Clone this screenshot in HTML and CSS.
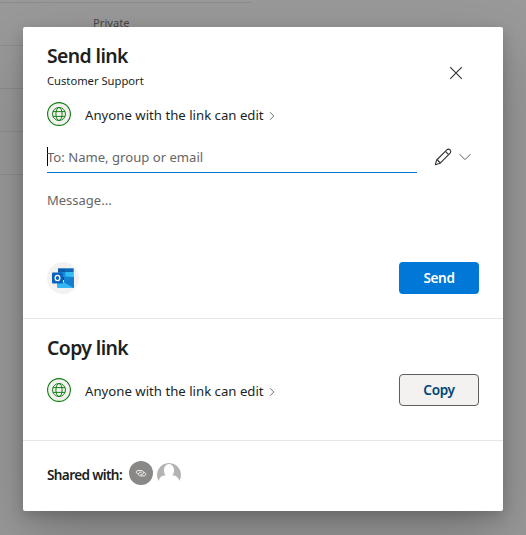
FILE: index.html
```html
<!DOCTYPE html>
<html lang="en">
<head>
<meta charset="utf-8">
<title>Send link</title>
<link rel="stylesheet" href="styles.css">
</head>
<body>
<svg width="0" height="0" class="defs" aria-hidden="true">
  <symbol id="globe" viewBox="0 0 24 24">
    <circle cx="12" cy="12" r="11.4" fill="#f3f2f1" stroke="#107c10" stroke-width="1.1"/>
    <g fill="none" stroke="#107c10" stroke-width="0.95">
      <circle cx="12" cy="12" r="6.5"/>
      <ellipse cx="12" cy="12" rx="3.1" ry="6.5"/>
      <path d="M6 9.6h12M6 14.4h12"/>
    </g>
  </symbol>
  <symbol id="chevron" viewBox="0 0 6 10">
    <path d="M1 1.2 4.8 5 1 8.8" fill="none" stroke="#605e5c" stroke-width="0.9"/>
  </symbol>
</svg>
<main class="page">
  <div class="row"></div>
  <div class="row"><span class="cell">Private</span></div>
  <div class="row"></div>
  <div class="row"></div>
  <div class="row"></div>
</main>
<div class="overlay">
  <div class="dialog" role="dialog">
    <section class="send">
      <header class="header">
        <div>
          <h2 class="title">Send link</h2>
          <p class="subtitle">Customer Support</p>
        </div>
        <svg class="close" viewBox="0 0 14 14"><path d="M1.2 1.2 12.8 12.8M12.8 1.2 1.2 12.8" fill="none" stroke="#323130" stroke-width="1.1"/></svg>
      </header>
      <div class="perm">
        <svg class="globe"><use href="#globe"/></svg>
        <span class="perm-text">Anyone with the link can edit</span>
        <svg class="chevron"><use href="#chevron"/></svg>
      </div>
      <div class="to">
        <div class="field"><i class="caret"></i><span>To: Name, group or email</span></div>
        <svg class="pencil" viewBox="0 0 18 18"><g fill="none" stroke="#323130" stroke-width="1.1" stroke-linejoin="round"><path d="M1.3 16.7 2.7 12 12.8 1.9a2.2 2.2 0 0 1 3.3 3.3L6 15.3Z"/><path d="M11.4 3.3l3.3 3.3M2.7 12l1.5.3.3 1.2 1.3.4.2 1.4"/></g></svg>
        <svg class="down" viewBox="0 0 12 8"><path d="M.6 1.2 6 6.6 11.4 1.2" fill="none" stroke="#605e5c"/></svg>
      </div>
      <div class="message">Message...</div>
      <footer class="actions">
        <div class="outlook">
          <svg viewBox="0 0 32 32">
            <path d="M11 6.500h15.500v9H11z" fill="#1490df"/>
            <path d="M11 6.500h7.500V10H11z" fill="#0f5aa8"/>
            <path d="M18.500 6.500h8V10h-8z" fill="#1066b5"/>
            <path d="M18.500 10h8v5h-8z" fill="#32bdf5"/>
            <path d="M11 15h7.500v3H11z" fill="#0a4a91"/>
            <path d="M17 14.500 27 15v11H17z" fill="#1682d4"/>
            <path d="M10 16.500 27 26H11a1 1 0 0 1-1-1z" fill="#35b8f1"/>
            <path d="M27 15v11L18 20.500z" fill="#147bcd"/>
            <rect x="5" y="10.500" width="11" height="11" rx="1" fill="#0a62bb"/>
            <ellipse cx="10.500" cy="16" rx="2.300" ry="2.600" fill="none" stroke="#fff" stroke-width="1.300"/>
          </svg>
        </div>
        <button class="btn primary">Send</button>
      </footer>
    </section>
    <section class="copy">
      <h2 class="title">Copy link</h2>
      <div class="copy-row">
        <div class="perm">
          <svg class="globe"><use href="#globe"/></svg>
          <span class="perm-text">Anyone with the link can edit</span>
          <svg class="chevron"><use href="#chevron"/></svg>
        </div>
        <button class="btn secondary">Copy</button>
      </div>
    </section>
    <section class="shared">
      <span class="shared-text">Shared with:</span>
      <svg class="avatar" viewBox="0 0 24 24"><circle cx="12" cy="12" r="12" fill="#8a8886"/><g fill="none" stroke="#fff" stroke-width="0.9" stroke-linecap="round"><path d="M8.800 12.800C6.600 12.300 6.800 9.600 9 9.600h3.400c2.900 0 2.900 3.700.2 3.700h-.8"/><path d="M12.400 11.200h-.9c-2.700 0-2.700 3.700.2 3.700h3.100c2.500 0 2.600-3 .5-3.500"/></g></svg>
      <svg class="avatar" viewBox="0 0 24 24"><path d="M1.600 20A12 12 0 1 1 22.400 20C21.500 16.500 19.500 14.800 15.300 14.300 19 10 16.500 3 12 3S5 10 8.700 14.300C4.500 14.800 2.500 16.500 1.600 20Z" fill="#b3b3b3"/></svg>
    </section>
  </div>
</div>
</body>
</html>
```
FILE: styles.css
```css
* { box-sizing: border-box; }

body {
  margin: 0;
  height: 535px;
  position: relative;
  overflow: hidden;
  background: #999;
  color: #201f1e;
  font-family: "Noto Sans", "Open Sans", sans-serif;
  font-size: 13.2px;
}

.defs { position: absolute; }
.page { width: 251px; }

.row {
  height: 43px;
  border-bottom: 1px solid #8c8c8c;
}
.row:first-child { height: 3px; }

.cell {
  display: block;
  padding: 12px 0 0 93px;
  font-size: 11.2px;
  line-height: 16px;
  color: #484848;
}

.overlay {
  position: absolute;
  inset: 0;
  padding: 27px 23px 24px;
}

.dialog {
  height: 484px;
  display: flex;
  flex-direction: column;
  background: #fff;
  border-radius: 2px;
  box-shadow: 0 25px 58px rgba(0, 0, 0, .22), 0 5px 14px rgba(0, 0, 0, .18);
}

.send {
  height: 292px;
  padding: 15px 24px 0;
  border-bottom: 1px solid #e6e6e6;
}

.header {
  display: flex;
  justify-content: space-between;
  height: 60px;
}

.title {
  margin: 0;
  font-size: 19.4px;
  line-height: 28px;
  font-weight: 600;
  letter-spacing: -.6px;
  white-space: nowrap;
}

.subtitle {
  margin: 3px 0 0;
  font-size: 11.2px;
  line-height: 16px;
}

.close {
  width: 14px;
  height: 14px;
  margin: 24px 16px 0 0;
}

.perm {
  display: flex;
  align-items: center;
  height: 24px;
}
.globe { width: 24px; height: 24px; margin-right: 14px; }
.perm-text {
  width: 180px;
  padding-top: 2px;
  line-height: 20px;
  white-space: nowrap;
}
.chevron { width: 6px; height: 10px; margin: 4px 0 0 4px; }

.to {
  display: flex;
  align-items: center;
  margin-top: 15px;
  height: 32px;
}
.field {
  display: flex;
  align-items: center;
  width: 370px;
  height: 32px;
  border-bottom: 1px solid #0078d4;
  font-size: 13.1px;
  color: #666;
}
.caret { width: 1px; height: 19px; margin-right: -1px; background: #000; }
.pencil { width: 18px; height: 18px; margin-left: 17px; }
.down { width: 12px; height: 8px; margin-left: 7px; }

.message {
  margin-top: 17px;
  height: 72px;
  font-size: 13px;
  line-height: 20px;
  color: #666;
}

.actions {
  display: flex;
  justify-content: space-between;
  align-items: center;
}
.outlook {
  width: 32px;
  height: 32px;
  border-radius: 50%;
  background: #f3f2f1;
}
.outlook svg { display: block; width: 32px; height: 32px; }

.btn {
  width: 80px;
  height: 32px;
  padding: 0;
  border: 0;
  border-radius: 4px;
  font: 600 13.6px/20px "Noto Sans", "Open Sans", sans-serif;
  letter-spacing: -.35px;
}
.primary { background: #0078d7; color: #fff; }
.secondary { background: #f3f2f1; color: #004578; border: 1px solid #605e5c; }

.copy {
  height: 122px;
  padding: 15px 24px 0;
  border-bottom: 1px solid #e6e6e6;
}
.copy-row {
  display: flex;
  justify-content: space-between;
  align-items: center;
  margin-top: 12px;
}

.shared {
  display: flex;
  align-items: center;
  gap: 4px;
  padding: 20px 24px 0;
}
.shared-text {
  width: 78px;
  padding-top: 2px;
  font-size: 13.6px;
  font-weight: 600;
  letter-spacing: -.65px;
  white-space: nowrap;
}
.avatar { width: 24px; height: 24px; }
```
